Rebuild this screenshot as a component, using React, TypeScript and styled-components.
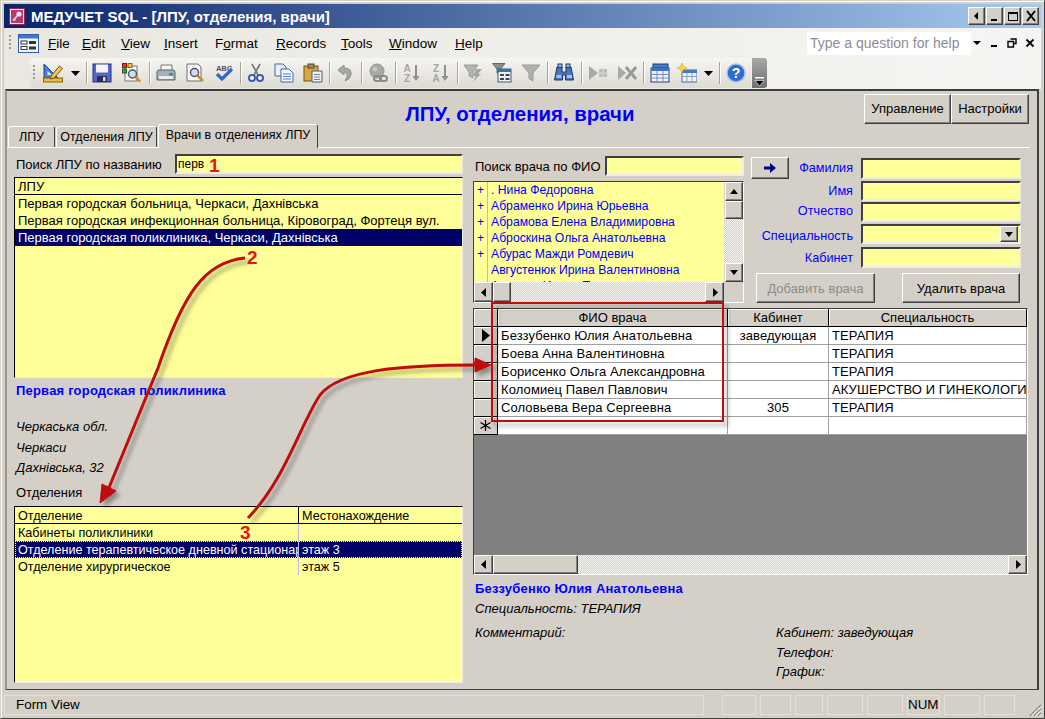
import React from "react";
import styled, { createGlobalStyle, css } from "styled-components";

const GlobalStyle = createGlobalStyle`
    html, body { margin: 0; padding: 0; background: #d4d0c8; }
    * { box-sizing: border-box; }
`

const raised = css`
    border: 1px solid;
    border-color: #fff #404040 #404040 #fff;
    box-shadow: inset -1px -1px 0 #808080;
    background: #d4d0c8;
`

const sunken = css`
    border: 2px solid;
    border-color: #404040 #efece6 #efece6 #404040;
    background: #ffff99;
`

const track = css`
    background: repeating-conic-gradient(#f6f5f2 0 25%, #d4d0c8 0 50%) 0 0 / 2px 2px;
`

type ToolItem = { id: string; w: number }

const tools: ToolItem[] = [
    { id: "design", w: 26 }, { id: "drop", w: 18 }, { id: "sep", w: 4 },
    { id: "save", w: 28 }, { id: "find", w: 31 }, { id: "sep", w: 4 },
    { id: "print", w: 29 }, { id: "preview", w: 29 }, { id: "spell", w: 29 }, { id: "sep", w: 4 },
    { id: "cut", w: 27 }, { id: "copy", w: 29 }, { id: "paste", w: 29 }, { id: "sep", w: 4 },
    { id: "undo", w: 28 }, { id: "sep", w: 4 }, { id: "link", w: 30 }, { id: "sep", w: 4 },
    { id: "az", w: 29 }, { id: "za", w: 29 }, { id: "sep", w: 4 },
    { id: "lightning", w: 28 }, { id: "filterform", w: 29 }, { id: "funnel", w: 29 }, { id: "sep", w: 4 },
    { id: "binoculars", w: 30 }, { id: "sep", w: 4 },
    { id: "newrec", w: 30 }, { id: "delrec", w: 28 }, { id: "sep", w: 4 },
    { id: "db", w: 30 }, { id: "newobj", w: 24 }, { id: "drop", w: 18 }, { id: "sep", w: 4 },
    { id: "help", w: 30 },
]

const toolIcon = (id: string) => {
    switch (id) {
        case "design":
            return <>
                <path d="M1 1V15H15Z" fill="#4d80d2" stroke="#1d3f8c" />
                <path d="M4.5 8V12H8.5Z" fill="#e6eefc" />
                <rect x="0.5" y="15" width="19" height="4" fill="#e9bc3a" stroke="#84660f" />
                <path d="M8 13L16.5 3L19.5 5.5L11 15L7.5 16Z" fill="#f2c94a" stroke="#6f5410" />
            </>
        case "save":
            return <>
                <rect x="1" y="1" width="18" height="18" fill="#5468cc" stroke="#27307f" />
                <rect x="4" y="1.5" width="12" height="8" fill="#f3f3fb" />
                <rect x="5" y="13" width="10" height="6" fill="#2b2b55" />
                <rect x="11" y="14" width="2.5" height="4" fill="#d8d8e8" />
            </>
        case "find":
            return <>
                <rect x="3" y="3" width="12" height="15" fill="#f4f4f0" stroke="#777" />
                <rect x="0.5" y="0.5" width="4" height="4" fill="#e03b2a" stroke="#8a1a10" />
                <rect x="6" y="0.5" width="4" height="4" fill="#f2c230" stroke="#886a10" />
                <rect x="0.5" y="6" width="4" height="4" fill="#40a040" stroke="#1a601a" />
                <circle cx="10.5" cy="11" r="4" fill="#cfe0f4" stroke="#556" strokeWidth="1.5" />
                <path d="M13.5 14L18 18.5" stroke="#d08a2a" strokeWidth="2.5" />
            </>
        case "print":
            return <>
                <path d="M5 2H16V8H5Z" fill="#f5f5f5" stroke="#777" />
                <path d="M1 8.5Q1 7 3 7H17Q19 7 19 9V17H1Z" fill="#a3b1bd" stroke="#56626d" />
                <rect x="3" y="13" width="14" height="3" fill="#e8ecef" />
                <rect x="13" y="10" width="4" height="2.5" fill="#30a040" />
            </>
        case "preview":
            return <>
                <path d="M2 1H13L16 4V18H2Z" fill="#f5f5f1" stroke="#6e6e6e" />
                <circle cx="9.5" cy="9.5" r="4" fill="#cfe0f4" stroke="#556" strokeWidth="1.5" />
                <path d="M12.5 12.5L18 18" stroke="#d08a2a" strokeWidth="2.5" />
            </>
        case "spell":
            return <>
                <text x="10" y="7.5" textAnchor="middle" fontFamily="Liberation Sans" fontSize="7.5" fontWeight="700" fill="#555">ABC</text>
                <path d="M3 11L8 16L18 6" fill="none" stroke="#3566c8" strokeWidth="3.2" />
            </>
        case "cut":
            return <>
                <path d="M6 1L12 12M14 1L8 12" stroke="#777" strokeWidth="1.6" />
                <circle cx="6" cy="15" r="3" fill="#fff" stroke="#3a5ab8" strokeWidth="2" />
                <circle cx="14" cy="15" r="3" fill="#fff" stroke="#3a5ab8" strokeWidth="2" />
            </>
        case "copy":
            return <>
                <path d="M1 1H9L12 4V13H1Z" fill="#e9f0fb" stroke="#3e64ae" />
                <path d="M7 6H15L19 10V19H7Z" fill="#f7faff" stroke="#3e64ae" />
                <path d="M9 11H17M9 13.5H17M9 16H17" stroke="#4f7cc8" />
            </>
        case "paste":
            return <>
                <rect x="1" y="3" width="14" height="15" fill="#d8a93a" stroke="#6d5416" />
                <rect x="5" y="1" width="6" height="4" fill="#9a8a6a" stroke="#554a30" />
                <path d="M9 8H19V19H9Z" fill="#eef2f8" stroke="#4a5a78" />
                <path d="M11 11.5H17M11 14H17M11 16.5H17" stroke="#77808f" />
            </>
        case "undo":
            return <path d="M3 7L9 2V5Q17 5 16 12Q15 16 10 18Q13 14 12 11Q11 9 9 9V12Z" fill="#a9a9a4" stroke="#8c8c88" />
        case "link":
            return <>
                <circle cx="9" cy="8" r="7" fill="#a8a8a4" stroke="#93938f" />
                <circle cx="7" cy="6" r="2.5" fill="#c4c4c0" />
                <rect x="6" y="13" width="7" height="5" rx="2.5" fill="none" stroke="#8b8b87" strokeWidth="2" />
                <rect x="12" y="13" width="7" height="5" rx="2.5" fill="none" stroke="#8b8b87" strokeWidth="2" />
            </>
        case "az":
        case "za":
            return <>
                <text x="5" y="8.5" textAnchor="middle" fontFamily="Liberation Sans" fontSize="10" fontWeight="700" fill="#a6a6a2">{id === "az" ? "A" : "Z"}</text>
                <text x="5" y="18.5" textAnchor="middle" fontFamily="Liberation Sans" fontSize="10" fontWeight="700" fill="#a6a6a2">{id === "az" ? "Z" : "A"}</text>
                <path d="M14 2V15" stroke="#8f8f8b" strokeWidth="2" />
                <path d="M10.5 13H17.5L14 18Z" fill="#8f8f8b" />
            </>
        case "lightning":
            return <>
                <path d="M1 2H15L10 9V15L6 13V9Z" fill="#b4b4b0" stroke="#9c9c98" />
                <path d="M13 6L19 6L15 11L18 11L10 19L13 13L10 13Z" fill="#a4a4a0" />
            </>
        case "filterform":
            return <>
                <path d="M0.5 0.5H13L8.5 6V12L5 10V6Z" fill="#8f8f8b" stroke="#66665f" />
                <rect x="6" y="6" width="13" height="13" fill="#eef2f7" stroke="#40586f" />
                <rect x="6" y="6" width="13" height="3" fill="#3b6fb4" />
                <rect x="8" y="11" width="4" height="2" fill="#444" />
                <rect x="13.5" y="11" width="4" height="2" fill="#444" />
                <rect x="8" y="15" width="4" height="2" fill="#444" />
                <rect x="13.5" y="15" width="4" height="2" fill="#444" />
            </>
        case "funnel":
            return <path d="M1 2H19L12 10V18L8 15.5V10Z" fill="#b0b0ac" stroke="#9a9a96" />
        case "binoculars":
            return <>
                <path d="M3 4H8V9H12V4H17L19.5 17H11.5V12H8.5V17H0.5Z" fill="#4c74bd" stroke="#1c386f" />
                <rect x="4" y="1" width="4" height="3.5" fill="#9db6e2" stroke="#1c386f" />
                <rect x="12" y="1" width="4" height="3.5" fill="#9db6e2" stroke="#1c386f" />
                <rect x="2.5" y="12" width="5" height="3" fill="#a9c2ea" />
                <rect x="13" y="12" width="5" height="3" fill="#a9c2ea" />
            </>
        case "newrec":
            return <>
                <path d="M1 3L10 10L1 17Z" fill="#a9a9a5" />
                <rect x="11" y="6" width="8" height="8" fill="#bcbcb8" />
                <path d="M15 5V15M10 10H20" stroke="#d9d9d5" />
            </>
        case "delrec":
            return <>
                <path d="M1 3L9 10L1 17Z" fill="#a9a9a5" />
                <path d="M9 4L19 16M19 4L9 16" stroke="#9a9a96" strokeWidth="3" />
            </>
        case "db":
            return <>
                <rect x="3" y="1" width="15" height="14" fill="#4a7ac8" stroke="#1f3f80" />
                <rect x="1" y="5" width="18" height="14" fill="#f1f5fb" stroke="#1f3f80" />
                <rect x="1" y="5" width="18" height="3" fill="#3f70c2" />
                <path d="M7 8V19M13 8V19M1 11.5H19M1 15H19" stroke="#6f8fc2" />
            </>
        case "newobj":
            return <>
                <rect x="5" y="7" width="15" height="12" fill="#eef3fb" stroke="#4a6a9a" />
                <rect x="5" y="7" width="15" height="3" fill="#4a78c0" />
                <path d="M10 10V19M15 10V19M5 13.5H20" stroke="#8aa4c8" />
                <path d="M5 0L6.5 3.5L10 5L6.5 6.5L5 10L3.5 6.5L0 5L3.5 3.5Z" fill="#f4d840" stroke="#c4a010" strokeWidth="0.5" />
            </>
        case "help":
            return <>
                <circle cx="10" cy="10" r="9" fill="#2f6cd0" stroke="#a9c4ea" strokeWidth="1.5" />
                <text x="10" y="15" textAnchor="middle" fontFamily="Liberation Sans" fontSize="14" fontWeight="700" fill="#fff">?</text>
            </>
        default:
            return null
    }
}

const captionGlyphs: Record<string, React.ReactNode> = {
    back: <path d="M8 3L4 7L8 11Z" fill="#000" />,
    min: <rect x="3" y="10" width="6" height="2" fill="#000" />,
    max: <path d="M2 3H12V12H2ZM3 5V11H11V5Z" fill="#000" fillRule="evenodd" />,
    close: <path d="M3 2L11 12M11 2L3 12" stroke="#000" strokeWidth="2" />,
}

const menus: { pre: string; key: string; rest: string; w: number }[] = [
    { pre: "", key: "F", rest: "ile", w: 34 },
    { pre: "", key: "E", rest: "dit", w: 39 },
    { pre: "", key: "V", rest: "iew", w: 43 },
    { pre: "", key: "I", rest: "nsert", w: 51 },
    { pre: "F", key: "o", rest: "rmat", w: 61 },
    { pre: "", key: "R", rest: "ecords", w: 65 },
    { pre: "", key: "T", rest: "ools", w: 48 },
    { pre: "", key: "W", rest: "indow", w: 66 },
    { pre: "", key: "H", rest: "elp", w: 30 },
]

const clinics = [
    "Первая городская больница, Черкаси, Дахнівська",
    "Первая городская инфекционная больница, Кіровоград, Фортеця вул.",
    "Первая городская поликлиника, Черкаси, Дахнівська",
]

const departments = [
    { name: "Кабинеты поликлиники", place: "" },
    { name: "Отделение терапевтическое дневной стационар", place: "этаж 3", selected: true },
    { name: "Отделение хирургическое", place: "этаж 5" },
]

const doctorNames = [
    { name: ". Нина Федоровна", plus: true },
    { name: "Абраменко Ирина Юрьевна", plus: true },
    { name: "Абрамова Елена Владимировна", plus: true },
    { name: "Аброскина Ольга Анатольевна", plus: true },
    { name: "Абурас Мажди Ромдевич", plus: true },
    { name: "Августенюк Ирина Валентиновна", plus: false },
    { name: "Авдеева Ирина Петровна", plus: false },
]

const staff = [
    { name: "Беззубенко Юлия Анатольевна", room: "заведующая", spec: "ТЕРАПИЯ" },
    { name: "Боева Анна Валентиновна", room: "", spec: "ТЕРАПИЯ" },
    { name: "Борисенко Ольга Александровна", room: "", spec: "ТЕРАПИЯ" },
    { name: "Коломиец Павел Павлович", room: "", spec: "АКУШЕРСТВО И ГИНЕКОЛОГИЯ" },
    { name: "Соловьева Вера Сергеевна", room: "305", spec: "ТЕРАПИЯ" },
]

const statusSlots = [
    { w: 34 }, { w: 31 }, { w: 28 }, { w: 36 }, { w: 36 },
    { w: 31, text: "NUM" }, { w: 36 }, { w: 31 },
]

const Dir = ({ d }: { d: "up" | "down" | "left" | "right" }) => {
    const p = { up: "M2 9H10L6 4Z", down: "M2 4H10L6 9Z", left: "M8 2V11L3 6.5Z", right: "M4 2V11L9 6.5Z" }[d]
    return <svg width="12" height="13" viewBox="0 0 12 13"><path d={p} fill="#000" /></svg>
}

export default function App() {
    return (
        <Window>
            <GlobalStyle />
            <TitleBar>
                <svg width="16" height="17" viewBox="0 0 16 17">
                    <rect x="0.5" y="0.5" width="15" height="16" fill="#f4e4ea" stroke="#8a2a55" />
                    <rect x="2" y="2" width="12" height="13" fill="#b23a72" />
                    <circle cx="10" cy="6" r="2.6" fill="#f6dce8" />
                    <path d="M8.5 7.5L4 12.5M5 11L6.5 12.5" stroke="#f6dce8" strokeWidth="1.4" />
                </svg>
                <TitleText>МЕДУЧЕТ SQL - [ЛПУ, отделения, врачи]</TitleText>
                <CaptionButtons>
                    {["back", "min", "max", "close"].map(k => (
                        <CaptionButton key={k}>
                            <svg width="14" height="14" viewBox="0 0 14 14">{captionGlyphs[k]}</svg>
                        </CaptionButton>
                    ))}
                </CaptionButtons>
            </TitleBar>

            <CommandBars>
                <MenuBar>
                    <Grip />
                    <MenuIcon>
                        <svg width="21" height="19" viewBox="0 0 21 19">
                            <rect x="0.5" y="0.5" width="20" height="18" fill="#f2f5fa" stroke="#2f5fa8" />
                            <rect x="1" y="1" width="19" height="3.5" fill="#3f78c8" />
                            <rect x="3" y="7" width="6" height="3" fill="#fff" stroke="#333" />
                            <rect x="11" y="7" width="7" height="3" fill="#333" />
                            <rect x="3" y="12.5" width="6" height="3" fill="#fff" stroke="#333" />
                            <rect x="11" y="12.5" width="7" height="3" fill="#333" />
                        </svg>
                    </MenuIcon>
                    <MenuList>
                        {menus.map(m => <MenuItem key={m.key + m.rest} $w={m.w}>{m.pre}<u>{m.key}</u>{m.rest}</MenuItem>)}
                    </MenuList>
                    <HelpBox>
                        <span>Type a question for help</span>
                        <svg width="10" height="6" viewBox="0 0 10 6"><path d="M1 1H9L5 5Z" fill="#000" /></svg>
                    </HelpBox>
                    <MdiButtons>
                        <svg width="10" height="10" viewBox="0 0 10 10"><rect x="2" y="7" width="6" height="2" fill="#000" /></svg>
                        <svg width="10" height="10" viewBox="0 0 10 10"><path d="M3.5 1H9V5.5H7M1 3.5H6.5V9H1Z" fill="none" stroke="#000" strokeWidth="1.4" /></svg>
                        <svg width="10" height="10" viewBox="0 0 10 10"><path d="M1.5 1.5L8.5 8.5M8.5 1.5L1.5 8.5" stroke="#000" strokeWidth="1.8" /></svg>
                    </MdiButtons>
                </MenuBar>
                <ToolRow>
                    <Toolbar>
                        <Grip />
                        {tools.map((t, i) => {
                            if (t.id === "sep") return <ToolSep key={i} />
                            if (t.id === "drop") return (
                                <ToolSlot key={i} $w={t.w}>
                                    <svg width="9" height="5" viewBox="0 0 9 5"><path d="M0 0H9L4.5 5Z" fill="#000" /></svg>
                                </ToolSlot>
                            )
                            return (
                                <ToolSlot key={i} $w={t.w}>
                                    <svg width="20" height="20" viewBox="0 0 20 20">{toolIcon(t.id)}</svg>
                                </ToolSlot>
                            )
                        })}
                    </Toolbar>
                    <Overflow>
                        <svg width="11" height="10" viewBox="0 0 11 10">
                            <rect x="1" y="0" width="9" height="1.5" fill="#fff" />
                            <path d="M1 3.5H10L5.5 9Z" fill="#000" stroke="#fff" strokeWidth="0.6" />
                        </svg>
                    </Overflow>
                </ToolRow>
            </CommandBars>

            <Form>
                <FormHeader>
                    <span />
                    <FormTitle>ЛПУ, отделения, врачи</FormTitle>
                    <HeaderButtons>
                        <HeaderButton $w={87}>Управление</HeaderButton>
                        <HeaderButton $w={78}>Настройки</HeaderButton>
                    </HeaderButtons>
                </FormHeader>

                <TabStrip>
                    <Tab $w={47}>ЛПУ</Tab>
                    <Tab $w={101}>Отделения ЛПУ</Tab>
                    <Tab $w={160} $active>Врачи в отделениях ЛПУ</Tab>
                </TabStrip>

                <TabPage>
                    <LeftColumn>
                        <SearchRow>
                            <SearchLabel $w={161}>Поиск ЛПУ по названию</SearchLabel>
                            <Field $w={288} $h={20}><FieldText>перв</FieldText></Field>
                        </SearchRow>
                        <ListBox $h={201} $top={3}>
                            <ListHead>ЛПУ</ListHead>
                            {clinics.map((c, i) => <ListRow key={c} $selected={i === 2}>{c}</ListRow>)}
                        </ListBox>
                        <Heading $top={5}>Первая городская поликлиника</Heading>
                        <Note $top={20}>Черкаська обл.</Note>
                        <Note $top={5}>Черкаси</Note>
                        <Note $top={4}>Дахнівська, 32</Note>
                        <Caption $top={9}>Отделения</Caption>
                        <ListBox $h={177} $top={5}>
                            <DeptHead>
                                <DeptCell $head>Отделение</DeptCell>
                                <DeptCell $head>Местонахождение</DeptCell>
                            </DeptHead>
                            {departments.map(d => (
                                <DeptRow key={d.name} $selected={d.selected}>
                                    <DeptCell>{d.name}</DeptCell>
                                    <DeptCell>{d.place}</DeptCell>
                                </DeptRow>
                            ))}
                        </ListBox>
                    </LeftColumn>

                    <RightColumn>
                        <TopArea>
                            <FinderColumn>
                                <SearchRow $top={2}>
                                    <SearchLabel $w={132}>Поиск врача по ФИО</SearchLabel>
                                    <Field $w={139} $h={20} />
                                </SearchRow>
                                <DoctorBox>
                                    <DoctorRows>
                                        {doctorNames.map(d => (
                                            <DoctorRow key={d.name}>
                                                <PlusCell>{d.plus ? "+" : ""}</PlusCell>
                                                <DoctorName>{d.name}</DoctorName>
                                            </DoctorRow>
                                        ))}
                                    </DoctorRows>
                                    <VScroll>
                                        <ScrollButton $w={18} $h={19}><Dir d="up" /></ScrollButton>
                                        <ScrollThumb $w={18} $h={18} />
                                        <ScrollTrack />
                                        <ScrollButton $w={18} $h={19}><Dir d="down" /></ScrollButton>
                                    </VScroll>
                                    <HScroll>
                                        <ScrollButton $w={19} $h={20}><Dir d="left" /></ScrollButton>
                                        <ScrollThumb $w={18} $h={20} />
                                        <ScrollTrack />
                                        <ScrollButton $w={19} $h={20}><Dir d="right" /></ScrollButton>
                                    </HScroll>
                                    <Corner />
                                </DoctorBox>
                            </FinderColumn>

                            <FieldsColumn>
                                <FieldRow $h={23} $top={2}>
                                    <ArrowCell>
                                        <ArrowButton>
                                            <svg width="14" height="12" viewBox="0 0 14 12"><path d="M1 4.5H7V1L13 6L7 11V7.5H1Z" fill="#000080" /></svg>
                                        </ArrowButton>
                                        <FieldLabel>Фамилия</FieldLabel>
                                    </ArrowCell>
                                    <Field $w={160} $h={21} />
                                </FieldRow>
                                <FieldRow $h={20} $top={2}>
                                    <FieldLabel>Имя</FieldLabel>
                                    <Field $w={160} $h={20} />
                                </FieldRow>
                                <FieldRow $h={20} $top={1}>
                                    <FieldLabel $shift={-3}>Отчество</FieldLabel>
                                    <Field $w={160} $h={20} />
                                </FieldRow>
                                <FieldRow $h={20} $top={2}>
                                    <FieldLabel $shift={3}>Специальность</FieldLabel>
                                    <Field $w={160} $h={20}>
                                        <ComboButton>
                                            <svg width="8" height="5" viewBox="0 0 8 5"><path d="M0 0H8L4 5Z" fill="#000" /></svg>
                                        </ComboButton>
                                    </Field>
                                </FieldRow>
                                <FieldRow $h={21} $top={3}>
                                    <FieldLabel>Кабинет</FieldLabel>
                                    <Field $w={160} $h={21} />
                                </FieldRow>
                                <ActionRow>
                                    <ActionButton $w={119} $disabled>Добавить врача</ActionButton>
                                    <ActionButton $w={118}>Удалить врача</ActionButton>
                                </ActionRow>
                            </FieldsColumn>
                        </TopArea>

                        <Datasheet>
                            <SheetHead>
                                <SelectorCell />
                                <HeadCell>ФИО врача</HeadCell>
                                <HeadCell>Кабинет</HeadCell>
                                <HeadCell>Специальность</HeadCell>
                            </SheetHead>
                            {staff.map((s, i) => (
                                <SheetRow key={s.name}>
                                    <SelectorCell>
                                        {i === 0 && <svg width="10" height="13" viewBox="0 0 10 13"><path d="M1 0L9 6.5L1 13Z" fill="#000" /></svg>}
                                    </SelectorCell>
                                    <DataCell>{s.name}</DataCell>
                                    <DataCell $center>{s.room}</DataCell>
                                    <DataCell>{s.spec}</DataCell>
                                </SheetRow>
                            ))}
                            <SheetRow>
                                <SelectorCell>
                                    <svg width="13" height="13" viewBox="0 0 13 13"><path d="M6.5 1V12M1.5 3.5L11.5 9.5M11.5 3.5L1.5 9.5" stroke="#000" strokeWidth="1.3" /></svg>
                                </SelectorCell>
                                <DataCell />
                                <DataCell />
                                <DataCell />
                            </SheetRow>
                            <SheetEmpty />
                            <HScroll>
                                <ScrollButton $w={19} $h={19}><Dir d="left" /></ScrollButton>
                                <ScrollThumb $w={85} $h={19} />
                                <ScrollTrack />
                                <ScrollButton $w={19} $h={19}><Dir d="right" /></ScrollButton>
                            </HScroll>
                        </Datasheet>

                        <Details>
                            <Heading $top={6}>Беззубенко Юлия Анатольевна</Heading>
                            <Note $top={4}>Специальность: ТЕРАПИЯ</Note>
                            <DetailGrid>
                                <Note>Комментарий:</Note>
                                <DetailStack>
                                    <Note>Кабинет: заведующая</Note>
                                    <Note>Телефон:</Note>
                                    <Note>График:</Note>
                                </DetailStack>
                            </DetailGrid>
                        </Details>
                    </RightColumn>
                </TabPage>
            </Form>

            <StatusBar>
                <StatusMain>Form View</StatusMain>
                {statusSlots.map((s, i) => <StatusSlot key={i} $w={s.w}>{s.text}</StatusSlot>)}
                <ResizeGrip>
                    <svg width="15" height="15" viewBox="0 0 15 15">
                        <path d="M14 3L3 14M14 7L7 14M14 11L11 14" stroke="#808080" strokeWidth="1.2" />
                        <path d="M14 4.4L4.4 14M14 8.4L8.4 14M14 12.4L12.4 14" stroke="#fff" />
                    </svg>
                </ResizeGrip>
            </StatusBar>

            <Annotations width="1045" height="719" viewBox="0 0 1045 719">
                <defs>
                    <filter id="shade" x="-10%" y="-10%" width="130%" height="130%">
                        <feDropShadow dx="4" dy="4" stdDeviation="2" floodColor="#000" floodOpacity="0.35" />
                    </filter>
                </defs>
                <g filter="url(#shade)" fill="none" stroke="#bf0a0a">
                    <path d="M245 258C205 262 184 292 158 368L108 490" strokeWidth="3" />
                    <path d="M100 503L102 484L116 491Z" fill="#bf0a0a" strokeWidth="1" />
                    <path d="M248 518C285 480 300 425 320 395C340 370 400 365 476 365" strokeWidth="3" />
                    <path d="M491 365L475 358V372Z" fill="#bf0a0a" strokeWidth="1" />
                    <rect x="492" y="303" width="231" height="118" strokeWidth="2" />
                </g>
            </Annotations>
            <Mark $x={208} $y={157}>1</Mark>
            <Mark $x={246} $y={249}>2</Mark>
            <Mark $x={239} $y={524}>3</Mark>
        </Window>
    )
}

const Window = styled.div`
    position: relative;
    display: flex;
    flex-direction: column;
    width: 1045px;
    height: 719px;
    padding: 3px 3px 1px 3px;
    border: 1px solid;
    border-color: #d4d0c8 #404040 #404040 #d4d0c8;
    box-shadow: inset 1px 1px 0 #fff;
    background: #d4d0c8;
    font-family: "Liberation Sans", Arial, sans-serif;
    font-size: 13px;
    color: #000;
    overflow: hidden;
`

const TitleBar = styled.div`
    display: flex;
    align-items: center;
    flex: 0 0 24px;
    padding: 0 2px 0 5px;
    background: linear-gradient(90deg, #0a246a, #a6caf0);
`

const TitleText = styled.span`
    margin-left: 6px;
    color: #fff;
    font-size: 15px;
    font-weight: bold;
    white-space: nowrap;
`

const CaptionButtons = styled.div`
    display: flex;
    gap: 1px;
    margin-left: auto;
`

const CaptionButton = styled.div`
    ${raised}
    display: flex;
    align-items: center;
    justify-content: center;
    width: 17px;
    height: 18px;
`

const CommandBars = styled.div`
    flex: 0 0 61px;
    background: linear-gradient(90deg, #e9e7e0, #f5f5f3);
`

const MenuBar = styled.div`
    display: flex;
    align-items: center;
    height: 30px;
    padding-left: 5px;
`

const Grip = styled.div`
    flex: 0 0 2px;
    width: 2px;
    height: 16px;
    background: repeating-linear-gradient(#9a9890 0 2px, transparent 2px 4px);
`

const MenuIcon = styled.div`
    display: flex;
    margin-left: 7px;
`

const MenuList = styled.div`
    display: flex;
    margin-left: 9px;
    font-size: 13.5px;
`

const MenuItem = styled.span<{ $w: number }>`
    flex: 0 0 ${({ $w }) => $w}px;
    white-space: nowrap;
`

const HelpBox = styled.div`
    display: flex;
    align-items: center;
    justify-content: space-between;
    width: 178px;
    height: 23px;
    margin-left: auto;
    padding: 0 3px 0 3px;
    background: linear-gradient(90deg, #fff 0 92%, #f5f5f3 92%);
    color: #8c8c94;
    font-size: 14px;
`

const MdiButtons = styled.div`
    display: flex;
    gap: 8px;
    margin: 0 6px 0 4px;
`

const ToolRow = styled.div`
    display: flex;
    height: 31px;
    padding: 0 0 1px 26px;
`

const Toolbar = styled.div`
    display: flex;
    align-items: center;
    height: 30px;
    padding-left: 3px;
    border-radius: 3px 0 0 3px;
    background: linear-gradient(#f6f5f1, #dedbd2);

    ${Grip} {
        margin-right: 5px;
    }
`

const ToolSlot = styled.div<{ $w: number }>`
    display: flex;
    align-items: center;
    justify-content: center;
    flex: 0 0 ${({ $w }) => $w}px;
`

const ToolSep = styled.div`
    flex: 0 0 4px;
    height: 22px;
    border-left: 1px solid #a5a39a;
    box-shadow: 1px 0 0 #fff inset;
    transform: translateX(2px);
`

const Overflow = styled.div`
    display: flex;
    align-items: flex-end;
    justify-content: center;
    width: 15px;
    height: 30px;
    margin-left: 1px;
    padding-bottom: 1px;
    border-radius: 0 3px 3px 0;
    background: linear-gradient(#a8a8a6, #6f6f6d);
`

const Form = styled.div`
    flex: 1;
    margin: 0 2px 0 1px;
    border: 2px solid;
    border-color: #3c3c3c #3c3c3c #3c3c3c #9b9891;
    border-bottom-width: 1px;
    background: #d4d0c8;
`

const FormHeader = styled.div`
    display: grid;
    grid-template-columns: 1fr auto 1fr;
    align-items: center;
    height: 33px;
`

const FormTitle = styled.div`
    padding: 12px 4px 0 0;
    color: #0000ff;
    font-size: 20.4px;
    font-weight: bold;
    white-space: nowrap;
`

const HeaderButtons = styled.div`
    display: flex;
    justify-content: flex-end;
    padding-right: 8px;
`

const HeaderButton = styled.div<{ $w: number }>`
    ${raised}
    display: flex;
    align-items: center;
    justify-content: center;
    width: ${({ $w }) => $w}px;
    height: 30px;
`

const TabStrip = styled.div`
    display: flex;
    align-items: flex-end;
    height: 24px;
    margin-right: 7px;
    padding-left: 1px;
    border-bottom: 1px solid #fff;
    font-size: 12.5px;
`

const Tab = styled.div<{ $w: number; $active?: boolean }>`
    display: flex;
    align-items: center;
    justify-content: center;
    width: ${({ $w }) => $w}px;
    height: ${({ $active }) => ($active ? 24 : 21)}px;
    margin-right: ${({ $active }) => ($active ? 0 : 1)}px;
    margin-bottom: ${({ $active }) => ($active ? -1 : 0)}px;
    padding-bottom: ${({ $active }) => ($active ? 3 : 0)}px;
    border: 1px solid;
    border-color: #fff #404040 transparent #fff;
    border-bottom: 0;
    border-radius: 3px 3px 0 0;
    background: #d4d0c8;
    white-space: nowrap;
`

const TabPage = styled.div`
    display: grid;
    grid-template-columns: 449px 555px;
    column-gap: 10px;
    padding: 6px 0 0 7px;
`

const LeftColumn = styled.div`
    display: flex;
    flex-direction: column;
`

const RightColumn = styled.div`
    display: flex;
    flex-direction: column;
`

const SearchRow = styled.div<{ $top?: number }>`
    display: flex;
    align-items: center;
    margin-top: ${({ $top }) => $top ?? 0}px;
`

const SearchLabel = styled.div<{ $w: number }>`
    flex: 0 0 ${({ $w }) => $w}px;
    padding-left: 2px;
    white-space: nowrap;
`

const Field = styled.div<{ $w: number; $h: number }>`
    ${sunken}
    display: flex;
    align-items: center;
    justify-content: flex-end;
    flex: 0 0 ${({ $w }) => $w}px;
    height: ${({ $h }) => $h}px;
`

const FieldText = styled.span`
    margin-right: auto;
    padding-left: 1px;
    font-size: 12px;
`

const ListBox = styled.div<{ $h: number; $top: number }>`
    ${sunken}
    height: ${({ $h }) => $h}px;
    margin-top: ${({ $top }) => $top}px;
    border-width: 1px;
    border-color: #000 #efece6 #efece6 #000;
    overflow: hidden;
`

const ListHead = styled.div`
    height: 17px;
    padding: 0 3px;
    line-height: 17px;
    border-bottom: 1px solid #000;
`

const ListRow = styled.div<{ $selected?: boolean }>`
    height: 17px;
    padding: 0 3px;
    line-height: 18px;
    background: ${({ $selected }) => ($selected ? "#000066" : "transparent")};
    color: ${({ $selected }) => ($selected ? "#fff" : "#000")};
    white-space: nowrap;
`

const Heading = styled.div<{ $top?: number }>`
    height: 16px;
    margin-top: ${({ $top }) => $top ?? 0}px;
    padding-left: 2px;
    color: #0000ff;
    font-weight: bold;
    letter-spacing: 0.2px;
    line-height: 16px;
    white-space: nowrap;
`

const Note = styled.div<{ $top?: number }>`
    height: 16px;
    margin-top: ${({ $top }) => $top ?? 0}px;
    padding-left: 2px;
    font-style: italic;
    line-height: 16px;
    white-space: nowrap;
`

const Caption = styled.div<{ $top: number }>`
    height: 16px;
    margin-top: ${({ $top }) => $top}px;
    padding-left: 2px;
    line-height: 16px;
`

const DeptHead = styled.div`
    display: grid;
    grid-template-columns: 284px 1fr;
    height: 17px;
    border-bottom: 1px solid #000;
    font-size: 12.6px;
`

const DeptRow = styled.div<{ $selected?: boolean }>`
    display: grid;
    grid-template-columns: 284px 1fr;
    height: 17px;
    font-size: 12.6px;
    background: ${({ $selected }) => ($selected ? "#000066" : "transparent")};
    color: ${({ $selected }) => ($selected ? "#fff" : "#000")};
    outline: ${({ $selected }) => ($selected ? "1px dotted #ffff99" : "none")};
    outline-offset: -1px;
`

const DeptCell = styled.div<{ $head?: boolean }>`
    padding: ${({ $head }) => ($head ? "1px 3px 0" : "0 3px")};
    line-height: ${({ $head }) => ($head ? 16 : 18)}px;
    border-right: 1px solid ${({ $head }) => ($head ? "#000" : "#b8b8e0")};
    overflow: hidden;
    white-space: nowrap;

    &:last-child {
        border-right: 0;
    }
`

const TopArea = styled.div`
    display: grid;
    grid-template-columns: 271px 1fr;
    column-gap: 7px;
    height: 149px;
`

const FinderColumn = styled.div`
    display: flex;
    flex-direction: column;
`

const DoctorBox = styled.div`
    display: grid;
    grid-template-columns: 250px 19px;
    grid-template-rows: 100px 20px;
    width: 271px;
    height: 122px;
    margin-top: 5px;
    border: 1px solid;
    border-color: #404040 #fff #fff #404040;
`

const DoctorRows = styled.div`
    background: #ffff99;
    overflow: hidden;
    font-size: 12.2px;
`

const DoctorRow = styled.div`
    display: grid;
    grid-template-columns: 14px 1fr;
    height: 16px;
    line-height: 16px;
`

const PlusCell = styled.div`
    padding-left: 3px;
    color: #0000ff;
    border-right: 1px solid #b8b8e0;
`

const DoctorName = styled.div`
    padding-left: 3px;
    color: #0000ff;
    white-space: nowrap;
`

const VScroll = styled.div`
    display: flex;
    flex-direction: column;
    align-items: center;
`

const HScroll = styled.div`
    display: flex;
    width: 100%;
`

const ScrollButton = styled.div<{ $w: number; $h: number }>`
    ${raised}
    display: flex;
    align-items: center;
    justify-content: center;
    flex: 0 0 auto;
    width: ${({ $w }) => $w}px;
    height: ${({ $h }) => $h}px;
`

const ScrollThumb = styled.div<{ $w: number; $h: number }>`
    ${raised}
    flex: 0 0 auto;
    width: ${({ $w }) => $w}px;
    height: ${({ $h }) => $h}px;
`

const ScrollTrack = styled.div`
    ${track}
    flex: 1;
    align-self: stretch;
`

const Corner = styled.div`
    background: #d4d0c8;
`

const FieldsColumn = styled.div`
    display: flex;
    flex-direction: column;
`

const FieldRow = styled.div<{ $h: number; $top: number }>`
    display: grid;
    grid-template-columns: 102px 160px;
    column-gap: 8px;
    align-items: end;
    height: ${({ $h }) => $h}px;
    margin-top: ${({ $top }) => $top}px;
`

const ArrowCell = styled.div`
    display: flex;
    align-items: center;
    justify-content: space-between;
    align-self: stretch;
`

const ArrowButton = styled.div`
    ${raised}
    display: flex;
    align-items: center;
    justify-content: center;
    width: 38px;
    height: 22px;
`

const FieldLabel = styled.div<{ $shift?: number }>`
    align-self: center;
    margin-top: ${({ $shift }) => $shift ?? 0}px;
    color: #0000ff;
    font-size: 12.7px;
    text-align: right;
    white-space: nowrap;
`

const ComboButton = styled.div`
    ${raised}
    display: flex;
    align-items: center;
    justify-content: center;
    width: 18px;
    height: 16px;
    margin-right: 1px;
`

const ActionRow = styled.div`
    display: flex;
    gap: 27px;
    margin-top: 5px;
    padding-left: 5px;
`

const ActionButton = styled.div<{ $w: number; $disabled?: boolean }>`
    ${raised}
    display: flex;
    align-items: center;
    justify-content: center;
    width: ${({ $w }) => $w}px;
    height: 30px;
    color: ${({ $disabled }) => ($disabled ? "#8f8c86" : "#000")};
`

const Datasheet = styled.div`
    display: flex;
    flex-direction: column;
    height: 267px;
    margin-top: 5px;
    border: 1px solid;
    border-color: #404040 #fff #fff #404040;
`

const SheetHead = styled.div`
    display: grid;
    grid-template-columns: 24px 230px 101px 1fr;
    flex: 0 0 18px;
    background: #d4d0c8;
`

const SheetRow = styled.div`
    display: grid;
    grid-template-columns: 24px 230px 101px 1fr;
    flex: 0 0 18px;
    height: 18px;
    background: #fff;
`

const SelectorCell = styled.div`
    display: flex;
    align-items: center;
    justify-content: center;
    border-right: 1px solid #000;
    border-bottom: 1px solid #000;
    background: #d4d0c8;
    box-shadow: inset 1px 1px 0 #fff;
`

const HeadCell = styled.div`
    padding-top: 1px;
    border-right: 1px solid #000;
    border-bottom: 1px solid #000;
    box-shadow: inset 1px 1px 0 #fff;
    text-align: center;
    line-height: 16px;
`

const DataCell = styled.div<{ $center?: boolean }>`
    height: 18px;
    padding: 1px 3px 0;
    border-right: 1px solid #a0a0a0;
    border-bottom: 1px solid #a0a0a0;
    line-height: 16px;
    letter-spacing: 0.1px;
    text-align: ${({ $center }) => ($center ? "center" : "left")};
    white-space: nowrap;
    overflow: hidden;
`

const SheetEmpty = styled.div`
    flex: 1;
    background: #808080;
`

const Details = styled.div`
    display: flex;
    flex-direction: column;
`

const DetailGrid = styled.div`
    display: grid;
    grid-template-columns: 301px 1fr;
    margin-top: 8px;
`

const DetailStack = styled.div`
    display: flex;
    flex-direction: column;
    gap: 3.5px;
`

const StatusBar = styled.div`
    position: relative;
    display: flex;
    align-items: center;
    gap: 4px;
    flex: 0 0 27px;
    padding-top: 3px;
    font-size: 13.4px;
`

const StatusMain = styled.div`
    flex: 0 0 700px;
    height: 20px;
    margin-right: 14px;
    padding-left: 11px;
    border: 1px solid #e3e0d9;
    line-height: 18px;
`

const StatusSlot = styled.div<{ $w: number }>`
    flex: 0 0 ${({ $w }) => $w}px;
    height: 20px;
    border: 1px solid #e3e0d9;
    line-height: 18px;
    text-align: center;
`

const ResizeGrip = styled.div`
    position: absolute;
    right: -1px;
    bottom: 0;
    display: flex;
`

const Annotations = styled.svg`
    position: absolute;
    left: -1px;
    top: -1px;
    pointer-events: none;
`

const Mark = styled.span<{ $x: number; $y: number }>`
    position: absolute;
    left: ${({ $x }) => $x}px;
    top: ${({ $y }) => $y}px;
    color: #ee1111;
    font-size: 19px;
    font-weight: bold;
    line-height: 16px;
`
